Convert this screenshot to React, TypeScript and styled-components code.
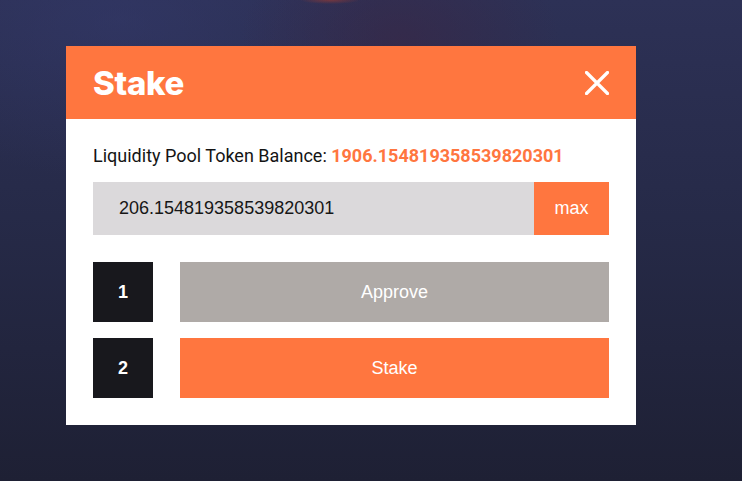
import React from "react";
import styled, { createGlobalStyle } from "styled-components";

const Global = createGlobalStyle`
  html, body { margin: 0; padding: 0; }
  body {
    width: 742px;
    height: 481px;
    overflow: hidden;
    font-family: Roboto, "Liberation Sans", sans-serif;
  }
  #root { height: 481px; }
`;

const Backdrop = styled.div`
  width: 742px;
  height: 481px;
  box-sizing: border-box;
  padding: 46px 0 0 66px;
  background:
    radial-gradient(ellipse 30px 4px at 330px 0px, rgba(160, 60, 50, 0.6), rgba(160, 60, 50, 0) 100%),
    radial-gradient(ellipse 160px 110px at 400px 40px, rgba(60, 38, 68, 0.55), rgba(60, 38, 68, 0) 100%),
    radial-gradient(ellipse 260px 160px at 120px 20px, rgba(52, 58, 110, 0.5), rgba(52, 58, 110, 0) 100%),
    linear-gradient(180deg, #2d3156 0%, #262a48 45%, #1e2034 100%);
`;

const Modal = styled.div`
  width: 570px;
  height: 379px;
  background: #ffffff;
  display: flex;
  flex-direction: column;
`;

const Header = styled.div`
  height: 73px;
  background: #ff763f;
  display: flex;
  align-items: center;
  justify-content: space-between;
  padding: 0 25px 0 27px;
  box-sizing: border-box;
`;

const Title = styled.h1`
  margin: 0;
  font-family: Inter, "Open Sans", sans-serif;
  font-weight: 800;
  font-size: 33px;
  color: #ffffff;
  letter-spacing: -0.3px;
  line-height: 1;
  padding-top: 2px;
`;

const CloseButton = styled.button`
  width: 28px;
  height: 28px;
  padding: 0;
  border: none;
  background: transparent;
  display: flex;
  align-items: center;
  justify-content: center;
  cursor: pointer;
`;

const Body = styled.div`
  padding: 26px 27px 0 27px;
  display: flex;
  flex-direction: column;
`;

const BalanceLine = styled.div`
  font-family: Roboto, sans-serif;
  font-size: 18px;
  color: #141414;
  line-height: 21px;
  height: 21px;
  margin-bottom: 16px;
`;

const BalanceValue = styled.span`
  color: #ff763f;
  font-weight: 700;
`;

const InputRow = styled.div`
  display: flex;
  height: 53px;
  margin-bottom: 27px;
`;

const AmountInput = styled.input`
  flex: 1;
  min-width: 0;
  border: none;
  outline: none;
  background: #dbd9db;
  padding: 0 0 0 26px;
  font-family: "Liberation Sans", Arial, sans-serif;
  font-size: 18px;
  color: #161616;
`;

const MaxButton = styled.button`
  width: 75px;
  border: none;
  background: #ff763f;
  color: #ffffff;
  font-family: "Liberation Sans", Arial, sans-serif;
  font-size: 18px;
  padding: 0;
  cursor: pointer;
`;

const Steps = styled.div`
  display: flex;
  flex-direction: column;
  gap: 16px;
`;

const StepRow = styled.div`
  display: flex;
  gap: 27px;
  height: 60px;
`;

const StepNumber = styled.div`
  width: 60px;
  height: 60px;
  background: #18181d;
  color: #ffffff;
  display: flex;
  align-items: center;
  justify-content: center;
  font-family: "Liberation Sans", Arial, sans-serif;
  font-weight: 700;
  font-size: 18px;
`;

const ActionButton = styled.button<{ $active?: boolean }>`
  flex: 1;
  border: none;
  background: ${(p) => (p.$active ? "#ff763f" : "#afaaa7")};
  color: #ffffff;
  font-family: "Liberation Sans", Arial, sans-serif;
  font-size: 18px;
  padding: 0;
  cursor: pointer;
`;

export default function App() {
  return (
    <>
      <Global />
      <Backdrop>
        <Modal>
          <Header>
            <Title>Stake</Title>
            <CloseButton aria-label="close">
              <svg width="24" height="24" viewBox="0 0 24 24">
                <path
                  d="M1.5 1.5 L22.5 22.5 M22.5 1.5 L1.5 22.5"
                  stroke="#ffffff"
                  strokeWidth="3.2"
                  strokeLinecap="round"
                  fill="none"
                />
              </svg>
            </CloseButton>
          </Header>
          <Body>
            <BalanceLine>
              Liquidity Pool Token Balance:{" "}
              <BalanceValue>1906.154819358539820301</BalanceValue>
            </BalanceLine>
            <InputRow>
              <AmountInput defaultValue="206.154819358539820301" />
              <MaxButton>max</MaxButton>
            </InputRow>
            <Steps>
              <StepRow>
                <StepNumber>1</StepNumber>
                <ActionButton>Approve</ActionButton>
              </StepRow>
              <StepRow>
                <StepNumber>2</StepNumber>
                <ActionButton $active>Stake</ActionButton>
              </StepRow>
            </Steps>
          </Body>
        </Modal>
      </Backdrop>
    </>
  );
}
